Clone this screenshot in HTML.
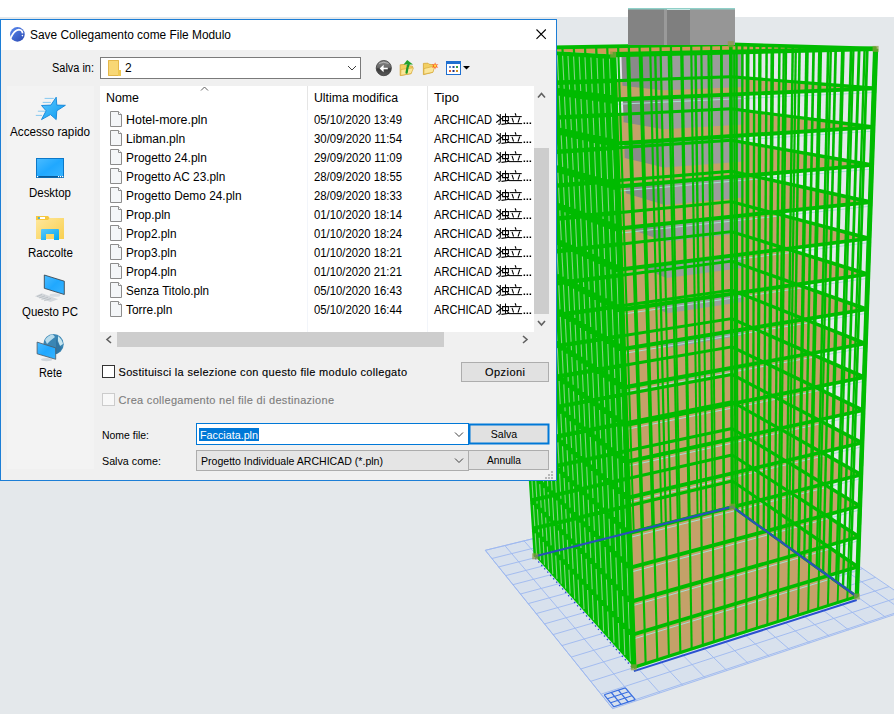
<!DOCTYPE html>
<html><head><meta charset="utf-8"><style>
html,body{margin:0;padding:0;background:#e4e8eb;overflow:hidden}
svg{display:block}
text{font-family:'Liberation Sans', sans-serif}
</style></head><body>
<svg width="894" height="714" viewBox="0 0 894 714">
<rect x="0" y="0" width="894" height="714" fill="#e4e8eb"/>
<rect x="0" y="0" width="894" height="17" fill="#ffffff"/>
<polygon points="485.3,550.3 743.4,487.4 918.4,606.6 612.7,708.7" fill="#d8e1ed"/>
<path d="M485.3 550.3L612.7 708.7M504.8 545.5L636.6 700.7M524.0 540.8L659.9 692.9M542.9 536.2L682.8 685.3M561.4 531.7L705.1 677.8M579.7 527.3L726.9 670.5M597.6 522.9L748.3 663.4M615.2 518.6L769.2 656.4M632.5 514.4L789.7 649.6M649.6 510.2L809.7 642.9M666.4 506.1L829.4 636.3M682.9 502.1L848.6 629.9M699.1 498.2L867.4 623.6M715.1 494.3L885.9 617.4M730.8 490.4L904.0 611.4M485.3 550.3L743.4 487.4M491.9 558.5L752.7 493.8M498.7 566.9L762.3 500.3M505.7 575.6L772.2 507.0M512.9 584.7L782.4 514.0M520.4 594.0L792.9 521.1M528.2 603.6L803.7 528.4M536.2 613.6L814.7 536.0M544.5 623.9L826.2 543.8M553.1 634.6L838.0 551.8M561.9 645.6L850.1 560.1M571.2 657.1L862.7 568.6M580.7 669.0L875.6 577.4M590.7 681.3L889.0 586.6M601.0 694.2L902.8 596.0M611.7 707.5L917.1 605.7M485.3 550.3L743.4 487.4L918.4 606.6L612.7 708.7Z" stroke="#9db8ef" stroke-width="0.9" fill="none"/>
<path d="M613.9 706.8L604.2 694.8M613.9 706.8L635.3 699.6M621.1 704.4L611.3 692.5M610.6 702.7L631.9 695.7M628.2 702.0L618.3 690.2M607.4 698.7L628.6 691.7M635.3 699.6L625.3 687.9M604.2 694.8L625.3 687.9" stroke="#3a6fe0" stroke-width="1.2" fill="none"/>
<polygon points="536.4,556.5 732.0,507.2 855.4,596.3 634.3,666.4" fill="#c4a169"/>
<polygon points="637.6,569.1 673.3,602.9 672.7,573.0 636.7,540.7" fill="#8a8a8a"/>
<polygon points="673.3,602.9 743.6,582.3 743.6,553.3 672.7,573.0" fill="#9c9c9c"/>
<polygon points="531.7,528.3 732.6,480.3 859.9,567.1 631.9,636.0" fill="#c4a169"/>
<polyline points="531.9,531.2 632.0,639.4 859.8,570.2" fill="none" stroke="#a9dcd4" stroke-width="1"/>
<polygon points="636.7,540.7 672.7,573.0 672.0,542.6 635.8,511.8" fill="#8a8a8a"/>
<polygon points="672.7,573.0 743.6,553.3 743.6,523.8 672.0,542.6" fill="#9c9c9c"/>
<polygon points="529.9,500.0 732.6,454.3 861.0,536.9 630.8,602.7" fill="#c4a169"/>
<polyline points="530.1,503.0 630.9,606.2 860.9,540.1" fill="none" stroke="#a9dcd4" stroke-width="1"/>
<polygon points="635.8,511.8 672.0,542.6 671.4,511.7 634.9,482.5" fill="#8a8a8a"/>
<polygon points="672.0,542.6 743.6,523.8 743.6,493.8 671.4,511.7" fill="#9c9c9c"/>
<polygon points="528.1,471.3 732.5,427.9 862.0,506.2 629.6,568.8" fill="#c4a169"/>
<polyline points="528.3,474.3 629.8,572.4 861.9,509.4" fill="none" stroke="#a9dcd4" stroke-width="1"/>
<polygon points="634.9,482.5 671.4,511.7 670.7,480.1 634.0,452.6" fill="#8a8a8a"/>
<polygon points="671.4,511.7 743.6,493.8 743.7,463.2 670.7,480.1" fill="#9c9c9c"/>
<polygon points="526.3,442.1 732.4,401.2 863.1,474.9 628.5,534.2" fill="#c4a169"/>
<polyline points="526.5,445.1 628.6,537.8 863.0,478.1" fill="none" stroke="#a9dcd4" stroke-width="1"/>
<polygon points="634.0,452.6 670.7,480.1 670.0,448.0 633.0,422.1" fill="#8a8a8a"/>
<polygon points="670.7,480.1 743.7,463.2 743.7,432.1 670.0,448.0" fill="#9c9c9c"/>
<polygon points="524.5,412.4 732.3,373.9 864.3,443.0 627.3,498.8" fill="#c4a169"/>
<polyline points="524.7,415.5 627.4,502.5 864.1,446.3" fill="none" stroke="#a9dcd4" stroke-width="1"/>
<polygon points="633.0,422.1 670.0,448.0 669.3,415.2 632.0,391.2" fill="#8a8a8a"/>
<polygon points="670.0,448.0 743.7,432.1 743.7,400.4 669.3,415.2" fill="#9c9c9c"/>
<polygon points="522.6,382.1 732.2,346.3 865.4,410.5 626.0,462.7" fill="#c4a169"/>
<polyline points="522.8,385.3 626.2,466.5 865.3,413.9" fill="none" stroke="#a9dcd4" stroke-width="1"/>
<polygon points="632.0,391.2 669.3,415.2 668.6,381.9 631.0,359.7" fill="#8a8a8a"/>
<polygon points="669.3,415.2 743.7,400.4 743.7,368.2 668.6,381.9" fill="#9c9c9c"/>
<polygon points="520.6,351.3 732.1,318.2 866.5,377.4 624.8,425.8" fill="#c4a169"/>
<polyline points="520.9,354.6 624.9,429.7 866.4,380.9" fill="none" stroke="#a9dcd4" stroke-width="1"/>
<polygon points="631.0,359.7 668.6,381.9 667.9,347.9 630.0,327.6" fill="#8a8a8a"/>
<polygon points="668.6,381.9 743.7,368.2 743.7,335.3 667.9,347.9" fill="#9c9c9c"/>
<polygon points="518.7,320.0 732.1,289.7 867.7,343.7 623.5,388.1" fill="#c4a169"/>
<polyline points="518.9,323.3 623.7,392.1 867.6,347.2" fill="none" stroke="#a9dcd4" stroke-width="1"/>
<polygon points="630.0,327.6 667.9,347.9 667.2,313.2 629.0,294.9" fill="#8a8a8a"/>
<polygon points="667.9,347.9 743.7,335.3 743.7,301.8 667.2,313.2" fill="#9c9c9c"/>
<polygon points="516.7,288.2 732.0,260.7 868.9,309.3 622.2,349.7" fill="#c4a169"/>
<polyline points="516.9,291.5 622.3,353.7 868.8,312.9" fill="none" stroke="#a9dcd4" stroke-width="1"/>
<polygon points="629.0,294.9 667.2,313.2 666.4,277.9 628.0,261.7" fill="#8a8a8a"/>
<polygon points="667.2,313.2 743.7,301.8 743.7,267.7 666.4,277.9" fill="#9c9c9c"/>
<polygon points="514.7,255.7 731.9,231.3 870.1,274.3 620.9,310.3" fill="#c4a169"/>
<polyline points="514.9,259.1 621.0,314.4 870.0,278.0" fill="none" stroke="#a9dcd4" stroke-width="1"/>
<polygon points="628.0,261.7 666.4,277.9 665.7,241.8 626.9,227.8" fill="#8a8a8a"/>
<polygon points="666.4,277.9 743.7,267.7 743.7,232.9 665.7,241.8" fill="#9c9c9c"/>
<polygon points="512.6,222.7 731.8,201.4 871.4,238.6 619.5,270.1" fill="#c4a169"/>
<polyline points="512.8,226.2 619.7,274.3 871.3,242.3" fill="none" stroke="#a9dcd4" stroke-width="1"/>
<polygon points="626.9,227.8 665.7,241.8 664.9,205.1 625.8,193.2" fill="#8a8a8a"/>
<polygon points="665.7,241.8 743.7,232.9 743.7,197.5 664.9,205.1" fill="#9c9c9c"/>
<polygon points="510.5,189.1 731.7,171.0 872.7,202.1 618.1,228.9" fill="#c4a169"/>
<polyline points="510.7,192.6 618.3,233.3 872.5,206.0" fill="none" stroke="#a9dcd4" stroke-width="1"/>
<polygon points="625.8,193.2 664.9,205.1 664.1,167.6 624.7,158.1" fill="#8a8a8a"/>
<polygon points="664.9,205.1 743.7,197.5 743.7,161.4 664.1,167.6" fill="#9c9c9c"/>
<polygon points="508.4,154.9 731.6,140.0 874.0,165.0 616.7,186.9" fill="#c4a169"/>
<polyline points="508.6,158.4 616.8,191.3 873.8,168.9" fill="none" stroke="#a9dcd4" stroke-width="1"/>
<polygon points="624.7,158.1 664.1,167.6 663.3,129.3 623.6,122.2" fill="#8a8a8a"/>
<polygon points="664.1,167.6 743.7,161.4 743.7,124.5 663.3,129.3" fill="#9c9c9c"/>
<polygon points="506.2,120.0 731.5,108.6 875.3,127.1 615.2,143.8" fill="#c4a169"/>
<polyline points="506.4,123.6 615.4,148.4 875.2,131.0" fill="none" stroke="#a9dcd4" stroke-width="1"/>
<polygon points="623.6,122.2 663.3,129.3 662.5,90.2 622.4,85.7" fill="#8a8a8a"/>
<polygon points="663.3,129.3 743.7,124.5 743.7,87.0 662.5,90.2" fill="#9c9c9c"/>
<polygon points="504.0,84.5 731.4,76.7 876.6,88.4 613.7,99.8" fill="#c4a169"/>
<polyline points="504.2,88.2 613.9,104.4 876.5,92.4" fill="none" stroke="#a9dcd4" stroke-width="1"/>
<polygon points="622.4,85.7 662.5,90.2 661.6,50.3 621.2,48.5" fill="#8a8a8a"/>
<polygon points="662.5,90.2 743.7,87.0 743.7,48.7 661.6,50.3" fill="#9c9c9c"/>
<polygon points="503.8,48.3 730.8,44.2 875.6,48.9 613.2,54.6" fill="#cf9a58"/>
<g fill="#00bb00"><polygon points="501.9,48.3 504.9,48.2 505.6,48.2 536.9,556.4 534.2,557.0 533.6,556.3"/><polygon points="514.6,48.0 516.1,48.0 516.9,48.0 546.5,553.9 545.2,554.3 544.5,553.5"/><polygon points="526.5,47.8 528.0,47.8 528.7,47.8 556.6,551.4 555.4,551.7 554.7,551.0"/><polygon points="538.2,47.6 539.7,47.6 540.5,47.6 566.7,548.8 565.5,549.1 564.8,548.4"/><polygon points="549.9,47.4 551.3,47.4 552.1,47.4 576.7,546.3 575.5,546.6 574.8,545.9"/><polygon points="561.3,47.2 562.8,47.2 563.5,47.2 586.6,543.8 585.4,544.1 584.6,543.4"/><polygon points="572.7,47.0 574.1,47.0 574.9,47.0 596.4,541.4 595.2,541.7 594.5,541.0"/><polygon points="583.9,46.8 585.3,46.8 586.1,46.8 606.1,538.9 604.9,539.2 604.2,538.5"/><polygon points="595.0,46.6 596.5,46.6 597.3,46.6 615.7,536.5 614.5,536.8 613.8,536.1"/><polygon points="606.1,46.4 607.4,46.4 608.3,46.4 625.3,534.1 624.1,534.4 623.3,533.7"/><polygon points="617.0,46.2 618.3,46.2 619.2,46.2 634.7,531.7 633.5,532.0 632.8,531.3"/><polygon points="627.7,46.0 629.1,46.0 629.9,46.0 644.1,529.3 642.9,529.6 642.1,529.0"/><polygon points="638.4,45.8 639.7,45.8 640.6,45.8 653.3,527.0 652.2,527.3 651.4,526.6"/><polygon points="649.0,45.6 650.3,45.6 651.2,45.6 662.5,524.7 661.4,525.0 660.6,524.3"/><polygon points="659.4,45.5 660.7,45.4 661.6,45.5 671.6,522.4 670.5,522.7 669.7,522.0"/><polygon points="669.8,45.3 671.1,45.2 672.0,45.3 680.7,520.1 679.5,520.4 678.8,519.7"/><polygon points="680.0,45.1 681.3,45.1 682.2,45.1 689.6,517.8 688.5,518.1 687.7,517.5"/><polygon points="690.1,44.9 691.4,44.9 692.3,44.9 698.5,515.6 697.4,515.9 696.6,515.2"/><polygon points="700.2,44.7 701.5,44.7 702.4,44.7 707.3,513.4 706.2,513.7 705.4,513.0"/><polygon points="710.1,44.5 711.4,44.5 712.3,44.6 716.0,511.2 714.9,511.4 714.1,510.8"/><polygon points="720.0,44.4 721.2,44.4 722.1,44.4 724.7,509.0 723.6,509.3 722.7,508.7"/><polygon points="729.1,44.2 731.6,44.2 732.5,44.2 733.8,506.7 731.6,507.2 730.8,506.6"/><polygon points="534.8,555.0 731.9,505.5 732.7,506.1 732.7,507.9 535.6,557.7 535.0,556.9"/><polygon points="533.1,526.9 731.8,479.6 732.6,480.2 732.6,482.5 533.9,530.1 533.2,529.4"/><polygon points="531.3,498.7 731.7,453.6 732.5,454.1 732.5,456.4 532.2,501.8 531.5,501.2"/><polygon points="529.6,469.9 731.6,427.1 732.5,427.7 732.5,430.0 530.4,473.1 529.7,472.4"/><polygon points="527.8,440.7 731.5,400.3 732.4,400.8 732.4,403.2 528.6,443.9 527.9,443.3"/><polygon points="525.9,410.9 731.4,373.1 732.3,373.5 732.3,375.9 526.7,414.1 526.1,413.6"/><polygon points="524.0,380.7 731.3,345.4 732.2,345.8 732.2,348.2 524.9,383.9 524.2,383.4"/><polygon points="522.1,349.9 731.2,317.2 732.1,317.6 732.1,320.1 523.0,353.1 522.3,352.6"/><polygon points="520.2,318.6 731.1,288.7 732.0,289.1 732.0,291.6 521.0,321.8 520.4,321.3"/><polygon points="518.2,286.7 731.0,259.7 731.9,260.0 732.0,262.6 519.1,289.9 518.4,289.5"/><polygon points="516.2,254.2 730.9,230.2 731.9,230.5 731.9,233.1 517.0,257.4 516.4,257.1"/><polygon points="514.1,221.2 730.9,200.2 731.8,200.5 731.8,203.1 515.0,224.4 514.3,224.1"/><polygon points="512.1,187.6 730.8,169.8 731.7,170.0 731.7,172.7 512.9,190.8 512.2,190.5"/><polygon points="509.9,153.3 730.6,138.8 731.6,138.9 731.6,141.7 510.8,156.5 510.1,156.3"/><polygon points="507.8,118.4 730.5,107.3 731.5,107.4 731.5,110.2 508.7,121.6 508.0,121.5"/><polygon points="505.6,82.8 730.4,75.3 731.4,75.4 731.4,78.2 506.5,86.1 505.8,86.0"/><polygon points="503.3,46.3 730.3,42.5 731.3,42.5 731.3,46.0 504.2,50.2 503.5,50.2"/><polygon points="729.3,44.2 730.9,44.2 732.3,44.2 733.6,506.9 732.2,507.3 730.9,506.4"/><polygon points="735.4,44.4 737.0,44.4 737.7,44.4 738.4,510.4 736.9,510.7 736.3,510.3"/><polygon points="741.1,44.6 742.8,44.5 743.5,44.6 743.5,514.0 742.0,514.4 741.4,514.0"/><polygon points="746.6,517.7 747.1,44.8 748.7,44.8 749.5,44.8 748.7,517.8 747.2,518.2"/><polygon points="751.8,521.5 753.1,45.0 754.7,44.9 755.5,45.0 754.0,521.6 752.5,522.0"/><polygon points="757.2,525.4 759.2,45.2 760.9,45.1 761.6,45.2 759.3,525.5 757.9,525.8"/><polygon points="762.6,529.3 765.4,45.4 767.1,45.3 767.9,45.4 764.8,529.4 763.3,529.8"/><polygon points="768.1,533.3 771.7,45.6 773.4,45.5 774.2,45.6 770.3,533.4 768.8,533.8"/><polygon points="773.7,537.3 778.2,45.8 779.9,45.8 780.7,45.8 775.9,537.4 774.4,537.8"/><polygon points="779.4,541.4 784.8,46.0 786.5,46.0 787.3,46.0 781.6,541.5 780.1,541.9"/><polygon points="785.2,545.6 791.5,46.2 793.2,46.2 794.0,46.2 787.4,545.7 785.9,546.1"/><polygon points="791.1,549.8 798.3,46.4 800.0,46.4 800.9,46.4 793.3,550.0 791.8,550.4"/><polygon points="797.0,554.1 805.2,46.7 807.0,46.6 807.8,46.6 799.3,554.3 797.8,554.7"/><polygon points="803.1,558.5 812.3,46.9 814.0,46.9 815.0,46.9 805.4,558.6 803.9,559.1"/><polygon points="809.3,563.0 819.5,47.1 821.3,47.1 822.2,47.1 811.6,563.1 810.1,563.6"/><polygon points="815.6,567.5 826.9,47.4 828.6,47.3 829.6,47.4 817.9,567.6 816.4,568.1"/><polygon points="822.0,572.1 834.4,47.6 836.1,47.6 837.1,47.6 824.3,572.3 822.8,572.7"/><polygon points="828.5,576.8 842.0,47.9 843.8,47.8 844.8,47.9 830.8,577.0 829.3,577.4"/><polygon points="835.0,581.6 849.8,48.1 851.6,48.1 852.6,48.1 837.5,581.7 835.9,582.2"/><polygon points="841.8,586.4 857.7,48.4 859.6,48.3 860.6,48.4 844.2,586.6 842.6,587.1"/><polygon points="848.6,591.4 865.9,48.6 867.7,48.6 868.7,48.6 851.1,591.5 849.5,592.0"/><polygon points="855.1,596.1 873.6,48.9 875.5,48.8 877.6,48.9 858.5,596.9 856.9,597.4"/><polygon points="731.5,505.9 733.0,505.6 857.6,595.2 857.6,597.2 856.0,597.8 731.6,507.8"/><polygon points="731.5,480.1 732.9,479.7 858.7,565.3 858.6,567.9 857.0,568.4 731.5,482.3"/><polygon points="731.4,454.0 732.8,453.7 859.7,535.1 859.6,537.8 858.0,538.2 731.4,456.3"/><polygon points="731.3,427.6 732.8,427.2 860.8,504.4 860.7,507.1 859.0,507.5 731.3,429.9"/><polygon points="731.2,400.7 732.7,400.4 861.9,473.1 861.8,475.8 860.1,476.2 731.2,403.1"/><polygon points="731.1,373.4 732.6,373.1 863.0,441.2 862.9,444.0 861.2,444.4 731.1,375.8"/><polygon points="731.0,345.7 732.5,345.4 864.1,408.7 864.0,411.6 862.3,412.0 731.0,348.2"/><polygon points="730.9,317.6 732.4,317.3 865.2,375.6 865.1,378.6 863.4,378.9 730.9,320.1"/><polygon points="730.8,289.0 732.4,288.8 866.4,341.9 866.3,344.9 864.6,345.2 730.8,291.5"/><polygon points="730.7,259.9 732.3,259.7 867.6,307.5 867.5,310.6 865.8,310.9 730.7,262.5"/><polygon points="730.6,230.4 732.2,230.2 868.8,272.5 868.7,275.6 866.9,275.9 730.6,233.0"/><polygon points="730.5,200.4 732.1,200.3 870.0,236.8 869.9,239.9 868.1,240.2 730.5,203.1"/><polygon points="730.4,169.9 732.0,169.8 871.3,200.3 871.2,203.6 869.4,203.8 730.4,172.6"/><polygon points="730.3,138.9 731.9,138.8 872.6,163.2 872.4,166.5 870.7,166.7 730.3,141.7"/><polygon points="730.2,107.4 731.8,107.3 873.9,125.3 873.8,128.7 872.0,128.8 730.2,110.2"/><polygon points="730.1,75.4 731.7,75.3 875.2,86.6 875.1,90.0 873.3,90.1 730.1,78.2"/><polygon points="730.0,42.5 731.6,42.5 876.6,46.8 876.4,51.0 874.6,51.0 730.0,46.0"/></g>
<rect x="628" y="8" width="36" height="37" fill="#838383"/>
<rect x="664" y="8" width="3" height="37" fill="#9a9a9a"/>
<rect x="667" y="10" width="23" height="35" fill="#7f7f7f"/>
<rect x="690" y="8" width="45" height="37" fill="#969696"/>
<rect x="628" y="8" width="107" height="1.5" fill="#8fd0c8"/>
<polyline points="633.9,671.1 856.7,600.0" fill="none" stroke="#2a50d0" stroke-width="2"/>
<polygon points="535.2,556.3 633.8,667.3 613.2,54.6 503.8,48.3" fill="#00bb00"/>
<path d="M536.6 556.0L535.2 533.4M534.9 528.0L533.4 505.1M533.1 499.6L531.7 476.3M531.3 470.7L529.9 447.0M529.5 441.3L528.0 417.2M527.7 411.4L526.2 386.8M525.8 381.0L524.3 356.0M523.9 350.0L522.3 324.6M522.0 318.5L520.4 292.6M520.0 286.4L518.4 260.1M518.0 253.8L516.3 227.0M515.9 220.5L514.3 193.2M513.9 186.7L512.2 158.9M511.7 152.2L510.0 123.9M509.6 117.1L507.8 88.2M507.4 81.3L505.6 51.9M540.5 560.4L539.2 537.7M538.8 532.3L537.4 509.2M537.1 503.6L535.7 480.1M535.3 474.5L533.9 450.6M533.5 444.9L532.1 420.6M531.7 414.8L530.2 390.0M529.9 384.1L528.4 358.9M528.0 352.9L526.4 327.3M526.1 321.1L524.5 295.0M524.1 288.8L522.5 262.2M522.1 255.9L520.5 228.8M520.1 222.3L518.4 194.8M518.0 188.2L516.4 160.2M515.9 153.4L514.2 124.8M513.8 118.0L512.0 88.9M511.6 81.9L509.8 52.2M544.5 564.9L543.2 542.0M542.9 536.6L541.5 513.3M541.2 507.7L539.7 484.1M539.4 478.4L538.0 454.3M537.6 448.5L536.2 424.1M535.8 418.2L534.4 393.3M534.0 387.3L532.5 361.9M532.1 355.8L530.6 330.0M530.2 323.8L528.7 297.5M528.3 291.2L526.7 264.4M526.3 258.0L524.7 230.7M524.3 224.2L522.7 196.4M522.3 189.7L520.6 161.4M520.2 154.7L518.5 125.8M518.1 118.9L516.4 89.5M515.9 82.4L514.2 52.5M548.6 569.5L547.3 546.5M547.0 540.9L545.6 517.5M545.3 511.9L543.9 488.1M543.6 482.3L542.1 458.1M541.8 452.3L540.4 427.6M540.0 421.7L538.6 396.5M538.2 390.5L536.7 364.9M536.4 358.8L534.9 332.8M534.5 326.5L533.0 300.0M532.6 293.7L531.0 266.7M530.6 260.2L529.0 232.7M528.7 226.1L527.0 198.0M526.6 191.3L525.0 162.8M524.6 155.9L522.9 126.8M522.5 119.8L520.8 90.1M520.3 83.0L518.6 52.8M552.8 574.1L551.5 550.9M551.1 545.4L549.8 521.8M549.5 516.1L548.1 492.1M547.8 486.4L546.4 461.9M546.1 456.1L544.6 431.2M544.3 425.2L542.9 399.9M542.5 393.8L541.0 368.0M540.7 361.9L539.2 335.6M538.8 329.3L537.3 302.6M536.9 296.2L535.4 268.9M535.0 262.4L533.4 234.6M533.1 228.0L531.4 199.7M531.1 192.9L529.4 164.1M529.0 157.2L527.4 127.8M526.9 120.8L525.2 90.8M524.8 83.6L523.1 53.1M557.0 578.9L555.7 555.5M555.4 549.9L554.1 526.1M553.7 520.4L552.4 496.2M552.1 490.4L550.7 465.8M550.4 459.9L549.0 434.8M548.6 428.8L547.2 403.3M546.9 397.2L545.4 371.2M545.1 365.0L543.6 338.5M543.2 332.1L541.7 305.2M541.4 298.7L539.8 271.2M539.5 264.6L537.9 236.6M537.5 229.9L535.9 201.4M535.6 194.6L533.9 165.5M533.6 158.5L531.9 128.8M531.5 121.7L529.8 91.5M529.4 84.2L527.7 53.4M561.3 583.7L560.0 560.2M559.7 554.5L558.4 530.6M558.1 524.8L556.8 500.5M556.4 494.6L555.1 469.8M554.8 463.8L553.4 438.6M553.1 432.5L551.6 406.8M551.3 400.6L549.9 374.4M549.5 368.1L548.1 341.4M547.7 335.0L546.2 307.8M545.9 301.3L544.4 273.6M544.0 266.9L542.5 238.7M542.1 231.9L540.5 203.1M540.2 196.2L538.6 166.9M538.2 159.8L536.5 129.9M536.1 122.7L534.5 92.2M534.1 84.8L532.4 53.7M565.7 588.6L564.4 564.9M564.1 559.2L562.8 535.1M562.5 529.3L561.2 504.7M560.9 498.8L559.6 473.8M559.2 467.8L557.9 442.4M557.6 436.3L556.2 410.3M555.8 404.1L554.4 377.7M554.1 371.3L552.7 344.4M552.3 338.0L550.8 310.5M550.5 303.9L549.0 276.0M548.6 269.3L547.1 240.8M546.8 233.9L545.2 204.9M544.8 197.9L543.3 168.3M542.9 161.2L541.3 130.9M540.9 123.7L539.2 92.9M538.8 85.5L537.2 54.0M570.1 593.6L568.9 569.7M568.6 564.0L567.3 539.7M567.0 533.9L565.7 509.1M565.4 503.2L564.1 478.0M563.8 471.9L562.5 446.2M562.1 440.1L560.8 413.9M560.4 407.7L559.1 381.0M558.7 374.6L557.3 347.5M557.0 341.0L555.5 313.3M555.2 306.6L553.7 278.4M553.4 271.7L551.9 242.9M551.5 236.0L550.0 206.7M549.6 199.6L548.1 169.7M547.7 162.5L546.1 132.0M545.7 124.7L544.1 93.6M543.7 86.1L542.0 54.3M574.7 598.7L573.4 574.6M573.1 568.9L571.9 544.4M571.6 538.5L570.3 513.5M570.0 507.6L568.7 482.1M568.4 476.1L567.1 450.2M566.8 444.0L565.5 417.6M565.1 411.3L563.8 384.4M563.4 378.0L562.1 350.6M561.7 344.0L560.3 316.1M560.0 309.4L558.5 280.9M558.2 274.1L556.7 245.1M556.3 238.1L554.8 208.5M554.5 201.4L552.9 171.2M552.6 164.0L551.0 133.1M550.6 125.7L549.0 94.3M548.7 86.7L547.0 54.6M579.3 603.9L578.1 579.6M577.8 573.8L576.6 549.1M576.3 543.2L575.0 518.1M574.7 512.0L573.5 486.4M573.2 480.3L571.9 454.2M571.6 447.9L570.2 421.3M569.9 415.0L568.6 387.9M568.3 381.4L566.9 353.7M566.6 347.1L565.2 319.0M564.8 312.2L563.4 283.5M563.1 276.6L561.6 247.3M561.3 240.3L559.8 210.4M559.4 203.2L557.9 172.7M557.6 165.4L556.0 134.3M555.7 126.8L554.1 95.0M553.7 87.4L552.1 55.0M584.0 609.1L582.8 584.7M582.5 578.8L581.3 554.0M581.0 548.0L579.8 522.7M579.5 516.6L578.3 490.8M578.0 484.6L576.7 458.3M576.4 452.0L575.1 425.2M574.8 418.7L573.5 391.4M573.2 384.8L571.8 357.0M571.5 350.3L570.1 321.9M569.8 315.1L568.4 286.1M568.1 279.1L566.7 249.5M566.3 242.5L564.9 212.3M564.5 205.0L563.0 174.3M562.7 166.9L561.2 135.4M560.8 127.9L559.3 95.8M558.9 88.1L557.3 55.3M588.7 614.5L587.6 589.9M587.3 584.0L586.1 558.9M585.9 552.9L584.7 527.4M584.4 521.2L583.2 495.2M582.9 489.0L581.6 462.4M581.3 456.1L580.1 429.0M579.8 422.6L578.5 395.0M578.2 388.4L576.9 360.3M576.5 353.5L575.2 324.8M574.9 318.0L573.5 288.7M573.2 281.7L571.8 251.9M571.5 244.7L570.0 214.2M569.7 206.9L568.2 175.8M567.9 168.4L566.4 136.6M566.0 129.0L564.5 96.6M564.2 88.8L562.6 55.7M593.6 619.9L592.5 595.1M592.2 589.2L591.1 563.9M590.8 557.9L589.6 532.1M589.3 526.0L588.2 499.7M587.9 493.4L586.7 466.7M586.4 460.3L585.1 433.0M584.8 426.5L583.6 398.7M583.3 392.0L582.0 363.6M581.7 356.8L580.4 327.9M580.0 320.9L578.7 291.4M578.4 284.3L577.0 254.2M576.7 247.0L575.3 216.2M575.0 208.8L573.5 177.4M573.2 169.9L571.7 137.8M571.4 130.1L569.9 97.4M569.6 89.5L568.0 56.0M598.6 625.5L597.5 600.5M597.2 594.5L596.1 569.1M595.8 563.0L594.7 537.0M594.4 530.8L593.2 504.3M593.0 498.0L591.8 471.0M591.5 464.5L590.3 437.0M590.0 430.4L588.8 402.4M588.5 395.7L587.2 367.0M586.9 360.2L585.6 331.0M585.3 324.0L584.0 294.2M583.7 287.0L582.4 256.6M582.0 249.3L580.7 218.2M580.4 210.8L579.0 179.1M578.6 171.4L577.2 139.1M576.9 131.3L575.4 98.2M575.1 90.2L573.6 56.4M603.6 631.2L602.6 606.0M602.3 599.9L601.2 574.3M600.9 568.1L599.8 542.0M599.6 535.7L598.4 509.0M598.2 502.6L597.0 475.4M596.7 468.9L595.6 441.2M595.3 434.5L594.1 406.2M593.8 399.4L592.6 370.5M592.3 363.6L591.0 334.1M590.7 327.1L589.4 297.0M589.1 289.8L587.8 259.0M587.5 251.7L586.2 220.3M585.9 212.8L584.5 180.7M584.2 173.0L582.8 140.3M582.4 132.4L581.0 99.0M580.7 91.0L579.2 56.8M608.8 636.9L607.7 611.6M607.5 605.5L606.4 579.6M606.2 573.4L605.1 547.0M604.8 540.7L603.7 513.8M603.5 507.4L602.3 479.9M602.1 473.3L600.9 445.4M600.6 438.6L599.5 410.1M599.2 403.2L598.0 374.1M597.7 367.1L596.5 337.4M596.2 330.2L595.0 299.9M594.7 292.6L593.4 261.5M593.1 254.1L591.8 222.4M591.5 214.8L590.2 182.4M589.8 174.7L588.5 141.6M588.2 133.7L586.8 99.8M586.4 91.7L585.0 57.2M614.0 642.8L613.0 617.2M612.8 611.1L611.7 585.0M611.5 578.8L610.4 552.2M610.2 545.8L609.1 518.7M608.9 512.2L607.8 484.5M607.5 477.9L606.4 449.7M606.1 442.9L605.0 414.1M604.7 407.2L603.6 377.7M603.3 370.7L602.1 340.7M601.8 333.4L600.6 302.8M600.3 295.4L599.1 264.1M598.8 256.6L597.5 224.6M597.2 216.9L595.9 184.2M595.6 176.3L594.3 142.9M594.0 134.9L592.6 100.7M592.3 92.5L590.9 57.5M619.4 648.8L618.4 623.0M618.2 616.9L617.2 590.6M616.9 584.3L615.9 557.5M615.7 551.0L614.6 523.7M614.4 517.1L613.3 489.2M613.1 482.5L612.0 454.0M611.7 447.2L610.6 418.1M610.4 411.1L609.2 381.5M609.0 374.3L607.8 344.0M607.5 336.7L606.4 305.8M606.1 298.3L604.9 266.7M604.6 259.1L603.4 226.8M603.1 219.0L601.8 186.0M601.5 178.0L600.3 144.3M600.0 136.1L598.6 101.6M598.3 93.3L597.0 57.9M624.8 654.9L623.9 629.0M623.7 622.7L622.7 596.2M622.5 589.9L621.5 562.8M621.2 556.3L620.2 528.8M620.0 522.1L619.0 494.0M618.7 487.2L617.7 458.5M617.4 451.6L616.4 422.3M616.1 415.2L615.0 385.3M614.8 378.1L613.7 347.5M613.4 340.1L612.3 308.8M612.0 301.3L610.8 269.4M610.6 261.7L609.4 229.0M609.1 221.2L607.9 187.8M607.6 179.8L606.3 145.6M606.1 137.4L604.8 102.5M604.5 94.1L603.2 58.4M630.4 661.2L629.5 635.0M629.3 628.7L628.3 602.0M628.1 595.6L627.2 568.3M626.9 561.8L626.0 533.9M625.7 527.3L624.8 498.9M624.5 492.1L623.5 463.1M623.3 456.1L622.3 426.5M622.0 419.4L621.0 389.1M620.7 381.9L619.6 351.0M619.4 343.5L618.3 312.0M618.0 304.4L616.9 272.1M616.6 264.3L615.5 231.3M615.2 223.4L614.1 189.7M613.8 181.6L612.6 147.0M612.3 138.7L611.1 103.4M610.8 94.9L609.5 58.8" stroke="#a2d8a2" stroke-width="1.1" opacity="0.8" fill="none"/>
<clipPath id="x0c"><polygon points="535.2,556.3 633.8,667.3 613.2,54.6 503.8,48.3"/></clipPath>
<g clip-path="url(#x0c)" fill="#00bb00"><polygon points="533.1,526.5 731.9,479.2 732.5,479.6 732.5,482.9 533.9,530.6 533.4,530.0"/><polygon points="531.4,498.2 731.8,453.1 732.4,453.5 732.4,456.9 532.1,502.3 531.6,501.8"/><polygon points="529.6,469.4 731.7,426.7 732.3,427.1 732.4,430.5 530.3,473.6 529.8,473.1"/><polygon points="527.8,440.1 731.6,399.8 732.3,400.2 732.3,403.6 528.5,444.4 528.0,443.9"/><polygon points="526.0,410.4 731.5,372.6 732.2,372.9 732.2,376.4 526.7,414.6 526.2,414.2"/><polygon points="524.1,380.1 731.4,344.9 732.1,345.2 732.1,348.8 524.8,384.4 524.3,384.0"/><polygon points="522.2,349.3 731.3,316.7 732.0,317.0 732.0,320.7 522.9,353.6 522.4,353.3"/><polygon points="520.2,318.0 731.2,288.2 731.9,288.4 731.9,292.1 521.0,322.4 520.5,322.0"/><polygon points="518.2,286.1 731.1,259.1 731.8,259.4 731.8,263.1 519.0,290.5 518.5,290.2"/><polygon points="516.2,253.6 731.1,229.6 731.7,229.8 731.8,233.6 517.0,258.1 516.5,257.8"/><polygon points="514.2,220.6 731.0,199.6 731.6,199.8 731.7,203.7 515.0,225.1 514.5,224.8"/><polygon points="512.1,186.9 730.9,169.2 731.5,169.3 731.6,173.2 512.9,191.4 512.4,191.2"/><polygon points="510.0,152.6 730.8,138.2 731.5,138.3 731.5,142.3 510.8,157.2 510.2,157.0"/><polygon points="507.8,117.7 730.7,106.7 731.4,106.8 731.4,110.8 508.6,122.3 508.1,122.2"/><polygon points="505.6,82.1 730.5,74.7 731.3,74.7 731.3,78.8 506.4,86.8 505.9,86.7"/></g>
<polyline points="535.3,558.1 633.9,669.3" fill="none" stroke="#2a50d0" stroke-width="1.3" stroke-dasharray="1.5 3"/>
<g fill="#00bb00"><polygon points="610.1,54.6 615.5,54.5 616.3,54.6 636.4,667.0 631.9,668.4 631.2,667.6"/><polygon points="626.2,54.3 627.8,54.3 628.6,54.3 646.7,663.7 645.3,664.1 644.6,663.3"/><polygon points="640.2,54.0 641.8,54.0 642.6,54.0 658.4,660.0 657.0,660.4 656.3,659.6"/><polygon points="654.0,53.7 655.5,53.6 656.4,53.7 669.9,656.3 668.6,656.7 667.9,656.0"/><polygon points="667.6,53.4 669.2,53.4 670.0,53.4 681.4,652.7 680.1,653.1 679.3,652.3"/><polygon points="681.0,53.1 682.6,53.1 683.5,53.1 692.7,649.1 691.4,649.5 690.6,648.7"/><polygon points="694.3,52.8 695.9,52.8 696.8,52.8 703.9,645.5 702.6,645.9 701.8,645.2"/><polygon points="707.4,52.5 708.9,52.5 709.8,52.5 714.9,642.0 713.6,642.4 712.9,641.7"/><polygon points="720.4,52.2 721.8,52.2 722.8,52.2 725.8,638.5 724.6,638.9 723.8,638.2"/><polygon points="733.1,52.0 734.6,51.9 735.5,52.0 736.7,635.1 735.4,635.5 734.6,634.8"/><polygon points="745.3,631.4 745.7,51.7 747.2,51.7 748.1,51.7 747.4,631.7 746.1,632.1"/><polygon points="755.9,628.0 758.2,51.4 759.6,51.4 760.6,51.4 757.9,628.4 756.7,628.7"/><polygon points="766.4,624.7 770.5,51.1 771.9,51.1 772.8,51.2 768.4,625.0 767.2,625.4"/><polygon points="776.7,621.4 782.6,50.9 784.0,50.9 785.0,50.9 778.8,621.7 777.6,622.1"/><polygon points="787.0,618.2 794.6,50.6 795.9,50.6 796.9,50.6 789.0,618.5 787.8,618.9"/><polygon points="797.1,614.9 806.4,50.4 807.8,50.3 808.8,50.4 799.1,615.2 798.0,615.6"/><polygon points="807.2,611.8 818.1,50.1 819.4,50.1 820.4,50.1 809.2,612.1 808.0,612.4"/><polygon points="817.1,608.6 829.6,49.9 831.0,49.8 832.0,49.9 819.1,608.9 818.0,609.3"/><polygon points="826.9,605.5 841.0,49.6 842.3,49.6 843.4,49.6 828.9,605.8 827.8,606.1"/><polygon points="836.7,602.4 852.3,49.4 853.6,49.3 854.6,49.4 838.6,602.7 837.5,603.0"/><polygon points="846.3,599.4 863.4,49.1 864.7,49.1 865.8,49.1 848.3,599.6 847.2,600.0"/><polygon points="854.6,596.7 873.0,48.9 877.1,48.8 878.2,48.9 859.0,596.2 855.5,597.4"/><polygon points="633.4,665.7 856.4,595.1 857.3,595.7 857.2,597.9 634.2,668.9 633.5,668.1"/><polygon points="632.3,632.8 857.4,565.1 858.3,565.8 858.2,568.5 633.1,636.6 632.4,635.9"/><polygon points="631.2,599.6 858.5,535.0 859.4,535.5 859.3,538.4 632.0,603.5 631.3,602.7"/><polygon points="630.0,565.7 859.5,504.2 860.4,504.8 860.3,507.7 630.9,569.6 630.1,568.9"/><polygon points="628.9,531.1 860.6,472.9 861.5,473.4 861.4,476.4 629.7,535.0 629.0,534.4"/><polygon points="627.7,495.8 861.7,441.1 862.6,441.5 862.5,444.5 628.5,499.8 627.8,499.1"/><polygon points="626.5,459.8 862.8,408.6 863.7,409.0 863.6,412.1 627.3,463.8 626.6,463.2"/><polygon points="625.2,423.0 863.9,375.5 864.9,375.9 864.8,379.0 626.1,426.9 625.3,426.4"/><polygon points="624.0,385.3 865.0,341.8 866.0,342.2 865.9,345.3 624.8,389.4 624.1,388.9"/><polygon points="622.6,346.9 866.2,307.4 867.2,307.8 867.1,311.0 623.5,351.0 622.8,350.5"/><polygon points="621.3,307.6 867.4,272.4 868.4,272.7 868.3,276.0 622.2,311.7 621.5,311.3"/><polygon points="620.0,267.5 868.6,236.7 869.6,236.9 869.5,240.3 620.9,271.6 620.1,271.2"/><polygon points="618.6,226.4 869.9,200.2 870.9,200.5 870.8,203.9 619.5,230.6 618.7,230.3"/><polygon points="617.2,184.4 871.2,163.1 872.2,163.3 872.1,166.8 618.1,188.6 617.3,188.3"/><polygon points="615.7,141.4 872.5,125.2 873.5,125.3 873.4,128.9 616.7,145.7 615.9,145.5"/><polygon points="614.2,97.5 873.8,86.5 874.8,86.6 874.7,90.2 615.2,101.7 614.4,101.6"/><polygon points="612.7,52.0 875.1,46.6 876.2,46.7 876.0,51.1 613.7,57.2 612.9,57.1"/></g>
<polyline points="535.2,556.3 732.3,506.7 856.8,596.5" fill="none" stroke="#2850b8" stroke-width="2.2"/>
<rect x="532.2" y="553.3" width="6" height="6" fill="#8a9a40" opacity="0.7"/>
<rect x="500.8" y="45.3" width="6" height="6" fill="#8a9a40" opacity="0.7"/>
<rect x="729.3" y="503.7" width="6" height="6" fill="#8a9a40" opacity="0.7"/>
<rect x="727.8" y="41.2" width="6" height="6" fill="#8a9a40" opacity="0.7"/>
<rect x="853.8" y="593.5" width="6" height="6" fill="#8a9a40" opacity="0.7"/>
<rect x="872.6" y="45.9" width="6" height="6" fill="#8a9a40" opacity="0.7"/>
<rect x="630.8" y="664.3" width="6" height="6" fill="#8a9a40" opacity="0.7"/>
<rect x="610.2" y="51.6" width="6" height="6" fill="#8a9a40" opacity="0.7"/>
<rect x="0" y="19" width="557" height="462" fill="#f0f0f0"/>
<rect x="1" y="20" width="555" height="30" fill="#ffffff"/>
<rect x="0.5" y="19.5" width="556" height="461" fill="none" stroke="#1c7ed6" stroke-width="1"/>
<defs><linearGradient id="ag" x1="0" y1="0" x2="1" y2="1"><stop offset="0" stop-color="#5a8af0"/><stop offset="1" stop-color="#2a48b0"/></linearGradient></defs>
<circle cx="17.4" cy="34.4" r="7.3" fill="url(#ag)"/>
<path d="M10.6 38.2 Q14 30.2 18.9 29.6 Q22.3 29.8 22.6 33.4" fill="none" stroke="#ffffff" stroke-width="1.7"/>
<circle cx="22.4" cy="35.6" r="0.8" fill="#fff"/>
<text x="30" y="39" font-size="12" fill="#000" textLength="201" lengthAdjust="spacingAndGlyphs">Save Collegamento come File Modulo</text>
<path d="M536.5 29.5 L545.8 38.8 M545.8 29.5 L536.5 38.8" stroke="#000" stroke-width="1.1"/>
<text x="52" y="72" font-size="12" fill="#000" textLength="42" lengthAdjust="spacingAndGlyphs">Salva in:</text>
<rect x="100.5" y="57.5" width="260" height="21" fill="#fff" stroke="#7a7a7a"/>
<path d="M108 60 H119 V76 H108 Z" fill="#f8d775"/>
<path d="M108.5 60.5 H118.5 V75.5 H108.5 Z" fill="none" stroke="#e4b74a"/>
<path d="M118 70 H121 V76 H118 Z" fill="#f0c850"/>
<text x="125" y="72" font-size="12" fill="#000">2</text>
<path d="M348 66 L352 70 L356 66" fill="none" stroke="#404040" stroke-width="1"/>
<defs><linearGradient id="bk" x1="0" y1="0" x2="0" y2="1"><stop offset="0" stop-color="#8a8a8a"/><stop offset="0.45" stop-color="#6a6a6a"/><stop offset="0.55" stop-color="#3a3a3a"/><stop offset="1" stop-color="#5a5a5a"/></linearGradient></defs><circle cx="383.8" cy="68.1" r="7.6" fill="url(#bk)" stroke="#3a3a3a" stroke-width="0.8"/><path d="M379 63.5 Q383.8 61 388.6 63.5" fill="none" stroke="#c8c8c8" stroke-width="0.9" opacity="0.8"/><path d="M387.8 68.5 H381.5" stroke="#fff" stroke-width="1.6"/><path d="M379.6 68.5 L383.6 64.8 V72.2 Z" fill="#fff"/>
<path d="M400.2 64.8 L405 64.4 L406 65.4 L412.6 66.2 L411 73.6 L400.2 75.6 Z" fill="#f2cf62" stroke="#d4a432" stroke-width="0.8"/><path d="M401 69.5 L413.5 67.8 L411.2 73.6 L400.6 75.4 Z" fill="#fbe69a" stroke="#d4a432" stroke-width="0.6"/><path d="M406.6 72.6 Q407.2 67 408.6 64.2" fill="none" stroke="#1e9a26" stroke-width="2.3" stroke-linecap="round"/><path d="M403.6 64.6 L407.2 60 L413 64.6 Z" fill="#22a02a"/>
<path d="M423.4 63.4 L428 63.2 L429 64.2 L434 65 L432.6 72.4 L423.4 74.6 Z" fill="#f2cf62" stroke="#d4a432" stroke-width="0.8"/><path d="M424 68.6 L434.8 66 L433 72.2 L423.8 74.2 Z" fill="#fbe69a" stroke="#d4a432" stroke-width="0.6"/><path d="M435.1 62.3 L435.9 64.6 L438.4 64.2 L436.6 65.8 L438.2 67.8 L435.8 67.2 L435.1 69.4 L434.3 67.2 L431.9 67.8 L433.5 65.8 L431.8 64.2 L434.3 64.6 Z" fill="#ff5a1a"/><circle cx="435.1" cy="65.8" r="1.2" fill="#ffe040"/>
<rect x="446.5" y="61.5" width="14" height="13" fill="#fff" stroke="#1e6fd0"/><rect x="446" y="61" width="15" height="3" fill="#1e6fd0"/><rect x="449" y="66" width="2" height="2" fill="#6a8fd0"/><rect x="452.5" y="66" width="2" height="2" fill="#2050a0"/><rect x="456" y="66" width="2" height="2" fill="#3aa040"/><rect x="449" y="70" width="2" height="2" fill="#e06030"/><rect x="452.5" y="70" width="2" height="2" fill="#203080"/><rect x="456" y="70" width="2" height="2" fill="#d09020"/><path d="M463 66 H470 L466.5 69.5 Z" fill="#000"/>
<rect x="7" y="86" width="87" height="383" fill="#f3f3f3"/>
<defs><linearGradient id="sg" x1="0" y1="0" x2="1" y2="1"><stop offset="0" stop-color="#5cc8ff"/><stop offset="1" stop-color="#0a9af0"/></linearGradient><linearGradient id="mg" x1="0" y1="0" x2="1" y2="1"><stop offset="0" stop-color="#4cbcff"/><stop offset="0.5" stop-color="#20a8ff"/><stop offset="1" stop-color="#38b4ff"/></linearGradient><linearGradient id="fg" x1="0" y1="0" x2="1" y2="1"><stop offset="0" stop-color="#ffe9a0"/><stop offset="1" stop-color="#f8cf50"/></linearGradient><linearGradient id="bg2" x1="0" y1="0" x2="1" y2="1"><stop offset="0" stop-color="#5cc8f8"/><stop offset="1" stop-color="#00a8f0"/></linearGradient></defs>
<path d="M44.6 98.4 H53.8 M42.7 102.4 H50.9 M37.9 111.2 H45 M35.8 115.4 H42" stroke="#7cc4f0" stroke-width="1" opacity="0.9"/>
<path d="M56.2 97.2 L56.8 105.1 L65.4 105.3 L56.8 110.8 L56.2 119.6 L50.5 114.6 L41.5 119.6 L46.1 110.8 L41.5 105.5 L50.9 105.1 Z" fill="url(#sg)" stroke="#1284d8" stroke-width="0.9" stroke-linejoin="round"/>
<text x="10" y="136" font-size="12" fill="#000" textLength="80" lengthAdjust="spacingAndGlyphs">Accesso rapido</text>
<rect x="36.5" y="158.5" width="27" height="19" fill="url(#mg)" stroke="#0c78c8"/><rect x="37" y="176" width="26" height="1.5" fill="#0a5a98"/><rect x="37" y="176" width="1.2" height="1.2" fill="#fff"/><rect x="58" y="176" width="1.2" height="1.2" fill="#fff"/><rect x="60" y="176" width="1.2" height="1.2" fill="#fff"/><rect x="62" y="176" width="1.2" height="1.2" fill="#fff"/>
<text x="29" y="197" font-size="12" fill="#000" textLength="42" lengthAdjust="spacingAndGlyphs">Desktop</text>
<path d="M36 216 H48 L49.5 218 H64 V239 H36 Z" fill="url(#fg)"/><path d="M36 216 H48 L49.5 218 L48 220 H36 Z" fill="#f6c83e"/><rect x="39.5" y="217" width="5.5" height="2" fill="#fff"/><circle cx="39" cy="218" r="1" fill="#20a8f0"/><path d="M41 240 V230 Q41 229 42 229 H58 Q59 229 59 230 V240 H54 V234 H46 V240 Z" fill="url(#bg2)"/>
<text x="28" y="257" font-size="12" fill="#000" textLength="45" lengthAdjust="spacingAndGlyphs">Raccolte</text>
<path d="M34.8 296.2 L41.9 293.3 L58.1 299.3 L50.5 301.9 Z" fill="#d4d8dc"/><path d="M37 296.5 L42 294.5 M39 298 L45 295.8 M41.5 299.5 L48 297.2 M44 300.8 L51 298.5" stroke="#aab0b6" stroke-width="0.6"/><ellipse cx="55" cy="295.2" rx="5.5" ry="1.6" fill="#d8dde2"/><path d="M44.3 275 L64.3 281.2 V294.5 L44.3 288.3 Z" fill="url(#mg)" stroke="#303840" stroke-width="0.8"/>
<text x="22" y="316" font-size="12" fill="#000" textLength="56" lengthAdjust="spacingAndGlyphs">Questo PC</text>
<circle cx="53.5" cy="344.3" r="10.2" fill="#3a86b4"/><path d="M45 340 Q48 335 53 334.5 L55 337 L50 341 L47 344 Z" fill="#b8dcec"/><path d="M58 336 Q62 339 63 344 L60 346 L58 341 Z" fill="#c8e6f0"/><path d="M56 338 Q58 345 62 348 Q60 352 56 354 Z" fill="#2a6a98" opacity="0.6"/><ellipse cx="46.7" cy="359.6" rx="5.7" ry="1.7" fill="#d0d6dc"/><path d="M37.1 342.1 L55.7 347.9 V359.3 L37.1 353.8 Z" fill="url(#mg)" stroke="#505860" stroke-width="0.8"/>
<text x="39" y="377" font-size="12" fill="#000" textLength="23" lengthAdjust="spacingAndGlyphs">Rete</text>
<rect x="100" y="86" width="434" height="246" fill="#ffffff"/>
<defs><g id="cjk" fill="none" stroke="#000" stroke-width="1.05" stroke-linecap="square"><path d="M497 114.8 L500 117.2"/><path d="M500.3 114.5 V123.2 Q500.3 124.6 498.8 124.2"/><path d="M496.6 122.2 L501.4 118.6"/><path d="M502.6 116.6 H508.4 V120.6 H502.6 Z"/><path d="M505.5 114 V123.4"/><path d="M502 124.3 L509 123.4"/><path d="M507.6 121.8 L508.6 123"/><path d="M515.3 113.8 L515.9 115.3"/><path d="M510 116.6 H521.2"/><path d="M512.2 118.4 L513.4 122"/><path d="M519.6 118 L518.2 122.2"/><path d="M509.6 123.6 H521.6"/></g></defs>
<path d="M201 90.5 L204.5 87 L208 90.5" fill="none" stroke="#606060" stroke-width="1"/>
<text x="106" y="102" font-size="12" fill="#000" textLength="33" lengthAdjust="spacingAndGlyphs">Nome</text>
<text x="314" y="102" font-size="12" fill="#000" textLength="84" lengthAdjust="spacingAndGlyphs">Ultima modifica</text>
<text x="434" y="102" font-size="12" fill="#000" textLength="25" lengthAdjust="spacingAndGlyphs">Tipo</text>
<rect x="307" y="86" width="1" height="24" fill="#e5e5e5"/><rect x="427" y="86" width="1" height="24" fill="#e5e5e5"/>
<rect x="307" y="110" width="1" height="222" fill="#f2f5fa"/><rect x="427" y="110" width="1" height="222" fill="#f2f5fa"/>
<path d="M110.5 111.5 H118.5 L121.5 114.5 V126.5 H110.5 Z" fill="#f4f6f8" stroke="#8c8c8c" stroke-width="1"/><path d="M118.5 111.5 V114.5 H121.5" fill="#fff" stroke="#8c8c8c" stroke-width="1"/>
<text x="126" y="124" font-size="12" fill="#000" textLength="81.5" lengthAdjust="spacingAndGlyphs">Hotel-more.pln</text>
<text x="314" y="124" font-size="12" fill="#000" textLength="88" lengthAdjust="spacingAndGlyphs">05/10/2020 13:49</text>
<text x="434" y="124" font-size="12" fill="#000" textLength="58" lengthAdjust="spacingAndGlyphs">ARCHICAD</text>
<use href="#cjk" x="0" y="0"/>
<path d="M523.6 122.4h1.5v1.5h-1.5zM526.6 122.4h1.5v1.5h-1.5zM529.6 122.4h1.5v1.5h-1.5z" fill="#000"/>
<path d="M110.5 130.5 H118.5 L121.5 133.5 V145.5 H110.5 Z" fill="#f4f6f8" stroke="#8c8c8c" stroke-width="1"/><path d="M118.5 130.5 V133.5 H121.5" fill="#fff" stroke="#8c8c8c" stroke-width="1"/>
<text x="126" y="143" font-size="12" fill="#000" textLength="59.3" lengthAdjust="spacingAndGlyphs">Libman.pln</text>
<text x="314" y="143" font-size="12" fill="#000" textLength="88" lengthAdjust="spacingAndGlyphs">30/09/2020 11:54</text>
<text x="434" y="143" font-size="12" fill="#000" textLength="58" lengthAdjust="spacingAndGlyphs">ARCHICAD</text>
<use href="#cjk" x="0" y="19"/>
<path d="M523.6 141.4h1.5v1.5h-1.5zM526.6 141.4h1.5v1.5h-1.5zM529.6 141.4h1.5v1.5h-1.5z" fill="#000"/>
<path d="M110.5 149.5 H118.5 L121.5 152.5 V164.5 H110.5 Z" fill="#f4f6f8" stroke="#8c8c8c" stroke-width="1"/><path d="M118.5 149.5 V152.5 H121.5" fill="#fff" stroke="#8c8c8c" stroke-width="1"/>
<text x="126" y="162" font-size="12" fill="#000" textLength="80.8" lengthAdjust="spacingAndGlyphs">Progetto 24.pln</text>
<text x="314" y="162" font-size="12" fill="#000" textLength="88" lengthAdjust="spacingAndGlyphs">29/09/2020 11:09</text>
<text x="434" y="162" font-size="12" fill="#000" textLength="58" lengthAdjust="spacingAndGlyphs">ARCHICAD</text>
<use href="#cjk" x="0" y="38"/>
<path d="M523.6 160.4h1.5v1.5h-1.5zM526.6 160.4h1.5v1.5h-1.5zM529.6 160.4h1.5v1.5h-1.5z" fill="#000"/>
<path d="M110.5 168.5 H118.5 L121.5 171.5 V183.5 H110.5 Z" fill="#f4f6f8" stroke="#8c8c8c" stroke-width="1"/><path d="M118.5 168.5 V171.5 H121.5" fill="#fff" stroke="#8c8c8c" stroke-width="1"/>
<text x="126" y="181" font-size="12" fill="#000" textLength="99.3" lengthAdjust="spacingAndGlyphs">Progetto AC 23.pln</text>
<text x="314" y="181" font-size="12" fill="#000" textLength="88" lengthAdjust="spacingAndGlyphs">28/09/2020 18:55</text>
<text x="434" y="181" font-size="12" fill="#000" textLength="58" lengthAdjust="spacingAndGlyphs">ARCHICAD</text>
<use href="#cjk" x="0" y="57"/>
<path d="M523.6 179.4h1.5v1.5h-1.5zM526.6 179.4h1.5v1.5h-1.5zM529.6 179.4h1.5v1.5h-1.5z" fill="#000"/>
<path d="M110.5 187.5 H118.5 L121.5 190.5 V202.5 H110.5 Z" fill="#f4f6f8" stroke="#8c8c8c" stroke-width="1"/><path d="M118.5 187.5 V190.5 H121.5" fill="#fff" stroke="#8c8c8c" stroke-width="1"/>
<text x="126" y="200" font-size="12" fill="#000" textLength="115.5" lengthAdjust="spacingAndGlyphs">Progetto Demo 24.pln</text>
<text x="314" y="200" font-size="12" fill="#000" textLength="88" lengthAdjust="spacingAndGlyphs">28/09/2020 18:33</text>
<text x="434" y="200" font-size="12" fill="#000" textLength="58" lengthAdjust="spacingAndGlyphs">ARCHICAD</text>
<use href="#cjk" x="0" y="76"/>
<path d="M523.6 198.4h1.5v1.5h-1.5zM526.6 198.4h1.5v1.5h-1.5zM529.6 198.4h1.5v1.5h-1.5z" fill="#000"/>
<path d="M110.5 206.5 H118.5 L121.5 209.5 V221.5 H110.5 Z" fill="#f4f6f8" stroke="#8c8c8c" stroke-width="1"/><path d="M118.5 206.5 V209.5 H121.5" fill="#fff" stroke="#8c8c8c" stroke-width="1"/>
<text x="126" y="219" font-size="12" fill="#000" textLength="44.5" lengthAdjust="spacingAndGlyphs">Prop.pln</text>
<text x="314" y="219" font-size="12" fill="#000" textLength="88" lengthAdjust="spacingAndGlyphs">01/10/2020 18:14</text>
<text x="434" y="219" font-size="12" fill="#000" textLength="58" lengthAdjust="spacingAndGlyphs">ARCHICAD</text>
<use href="#cjk" x="0" y="95"/>
<path d="M523.6 217.4h1.5v1.5h-1.5zM526.6 217.4h1.5v1.5h-1.5zM529.6 217.4h1.5v1.5h-1.5z" fill="#000"/>
<path d="M110.5 225.5 H118.5 L121.5 228.5 V240.5 H110.5 Z" fill="#f4f6f8" stroke="#8c8c8c" stroke-width="1"/><path d="M118.5 225.5 V228.5 H121.5" fill="#fff" stroke="#8c8c8c" stroke-width="1"/>
<text x="126" y="238" font-size="12" fill="#000" textLength="50.5" lengthAdjust="spacingAndGlyphs">Prop2.pln</text>
<text x="314" y="238" font-size="12" fill="#000" textLength="88" lengthAdjust="spacingAndGlyphs">01/10/2020 18:24</text>
<text x="434" y="238" font-size="12" fill="#000" textLength="58" lengthAdjust="spacingAndGlyphs">ARCHICAD</text>
<use href="#cjk" x="0" y="114"/>
<path d="M523.6 236.4h1.5v1.5h-1.5zM526.6 236.4h1.5v1.5h-1.5zM529.6 236.4h1.5v1.5h-1.5z" fill="#000"/>
<path d="M110.5 244.5 H118.5 L121.5 247.5 V259.5 H110.5 Z" fill="#f4f6f8" stroke="#8c8c8c" stroke-width="1"/><path d="M118.5 244.5 V247.5 H121.5" fill="#fff" stroke="#8c8c8c" stroke-width="1"/>
<text x="126" y="257" font-size="12" fill="#000" textLength="50.5" lengthAdjust="spacingAndGlyphs">Prop3.pln</text>
<text x="314" y="257" font-size="12" fill="#000" textLength="88" lengthAdjust="spacingAndGlyphs">01/10/2020 18:21</text>
<text x="434" y="257" font-size="12" fill="#000" textLength="58" lengthAdjust="spacingAndGlyphs">ARCHICAD</text>
<use href="#cjk" x="0" y="133"/>
<path d="M523.6 255.4h1.5v1.5h-1.5zM526.6 255.4h1.5v1.5h-1.5zM529.6 255.4h1.5v1.5h-1.5z" fill="#000"/>
<path d="M110.5 263.5 H118.5 L121.5 266.5 V278.5 H110.5 Z" fill="#f4f6f8" stroke="#8c8c8c" stroke-width="1"/><path d="M118.5 263.5 V266.5 H121.5" fill="#fff" stroke="#8c8c8c" stroke-width="1"/>
<text x="126" y="276" font-size="12" fill="#000" textLength="50.5" lengthAdjust="spacingAndGlyphs">Prop4.pln</text>
<text x="314" y="276" font-size="12" fill="#000" textLength="88" lengthAdjust="spacingAndGlyphs">01/10/2020 21:21</text>
<text x="434" y="276" font-size="12" fill="#000" textLength="58" lengthAdjust="spacingAndGlyphs">ARCHICAD</text>
<use href="#cjk" x="0" y="152"/>
<path d="M523.6 274.4h1.5v1.5h-1.5zM526.6 274.4h1.5v1.5h-1.5zM529.6 274.4h1.5v1.5h-1.5z" fill="#000"/>
<path d="M110.5 282.5 H118.5 L121.5 285.5 V297.5 H110.5 Z" fill="#f4f6f8" stroke="#8c8c8c" stroke-width="1"/><path d="M118.5 282.5 V285.5 H121.5" fill="#fff" stroke="#8c8c8c" stroke-width="1"/>
<text x="126" y="295" font-size="12" fill="#000" textLength="83.1" lengthAdjust="spacingAndGlyphs">Senza Titolo.pln</text>
<text x="314" y="295" font-size="12" fill="#000" textLength="88" lengthAdjust="spacingAndGlyphs">05/10/2020 16:43</text>
<text x="434" y="295" font-size="12" fill="#000" textLength="58" lengthAdjust="spacingAndGlyphs">ARCHICAD</text>
<use href="#cjk" x="0" y="171"/>
<path d="M523.6 293.4h1.5v1.5h-1.5zM526.6 293.4h1.5v1.5h-1.5zM529.6 293.4h1.5v1.5h-1.5z" fill="#000"/>
<path d="M110.5 301.5 H118.5 L121.5 304.5 V316.5 H110.5 Z" fill="#f4f6f8" stroke="#8c8c8c" stroke-width="1"/><path d="M118.5 301.5 V304.5 H121.5" fill="#fff" stroke="#8c8c8c" stroke-width="1"/>
<text x="126" y="314" font-size="12" fill="#000" textLength="46.4" lengthAdjust="spacingAndGlyphs">Torre.pln</text>
<text x="314" y="314" font-size="12" fill="#000" textLength="88" lengthAdjust="spacingAndGlyphs">05/10/2020 16:44</text>
<text x="434" y="314" font-size="12" fill="#000" textLength="58" lengthAdjust="spacingAndGlyphs">ARCHICAD</text>
<use href="#cjk" x="0" y="190"/>
<path d="M523.6 312.4h1.5v1.5h-1.5zM526.6 312.4h1.5v1.5h-1.5zM529.6 312.4h1.5v1.5h-1.5z" fill="#000"/>
<rect x="534" y="86" width="15" height="246" fill="#f0f0f0"/>
<rect x="534" y="148" width="15" height="166" fill="#cdcdcd"/>
<path d="M538 97.5 L541.5 93.5 L545 97.5" fill="none" stroke="#606060" stroke-width="1.6"/>
<path d="M538 321 L541.5 325 L545 321" fill="none" stroke="#606060" stroke-width="1.6"/>
<rect x="117" y="332" width="327" height="15" fill="#cdcdcd"/>
<path d="M111 336 L107 339.5 L111 343" fill="none" stroke="#606060" stroke-width="1.6"/>
<path d="M523 336 L527 339.5 L523 343" fill="none" stroke="#606060" stroke-width="1.6"/>
<rect x="102.5" y="365.5" width="12" height="12" fill="#fff" stroke="#333"/>
<text x="118.5" y="376" font-size="11" fill="#000" textLength="288.5" lengthAdjust="spacing" stroke="#000" stroke-width="0.12">Sostituisci la selezione con questo file modulo collegato</text>
<rect x="102.5" y="393.5" width="12" height="12" fill="#f8f8f8" stroke="#cccccc"/>
<text x="118.5" y="404" font-size="11" fill="#7d7d7d" textLength="215.5" lengthAdjust="spacing" stroke="#7d7d7d" stroke-width="0.12">Crea collegamento nel file di destinazione</text>
<rect x="461.5" y="362.5" width="87" height="19" fill="#e1e1e1" stroke="#adadad"/>
<text x="505" y="376" font-size="11" fill="#000" text-anchor="middle" textLength="40" lengthAdjust="spacing" stroke="#000" stroke-width="0.12">Opzioni</text>
<text x="102" y="439" font-size="11" fill="#000" textLength="47" lengthAdjust="spacingAndGlyphs">Nome file:</text>
<rect x="196.5" y="423.5" width="272" height="21" fill="#fff" stroke="#0078d7"/>
<rect x="199" y="428" width="60" height="13" fill="#0078d7"/>
<text x="200" y="439" font-size="11" fill="#fff" textLength="58" lengthAdjust="spacingAndGlyphs">Facciata.pln</text>
<path d="M455 432.5 L459 436.5 L463 432.5" fill="none" stroke="#404040"/>
<rect x="469" y="424" width="80" height="20" fill="#e1e1e1"/>
<rect x="469.5" y="424.5" width="79" height="19" fill="none" stroke="#0078d7" stroke-width="2"/>
<text x="504" y="438" font-size="11.8" fill="#000" text-anchor="middle" textLength="26.5" lengthAdjust="spacingAndGlyphs">Salva</text>
<text x="102" y="465" font-size="11" fill="#000" textLength="59" lengthAdjust="spacingAndGlyphs">Salva come:</text>
<rect x="196.5" y="450.5" width="272" height="20" fill="#e5e5e5" stroke="#acacac"/>
<text x="201" y="465" font-size="11" fill="#000" textLength="182" lengthAdjust="spacingAndGlyphs">Progetto Individuale ARCHICAD (*.pln)</text>
<path d="M455 458.5 L459 462.5 L463 458.5" fill="none" stroke="#404040"/>
<rect x="468.5" y="450.5" width="80" height="19" fill="#e1e1e1" stroke="#adadad"/>
<text x="504" y="464" font-size="11.8" fill="#000" text-anchor="middle" textLength="34" lengthAdjust="spacingAndGlyphs">Annulla</text>
<rect x="551" y="471" width="2" height="2" fill="#b8b8b8"/>
<rect x="551" y="474" width="2" height="2" fill="#b8b8b8"/>
<rect x="548" y="474" width="2" height="2" fill="#b8b8b8"/>
<rect x="551" y="477" width="2" height="2" fill="#b8b8b8"/>
<rect x="548" y="477" width="2" height="2" fill="#b8b8b8"/>
<rect x="545" y="477" width="2" height="2" fill="#b8b8b8"/>
</svg>
</body></html>
